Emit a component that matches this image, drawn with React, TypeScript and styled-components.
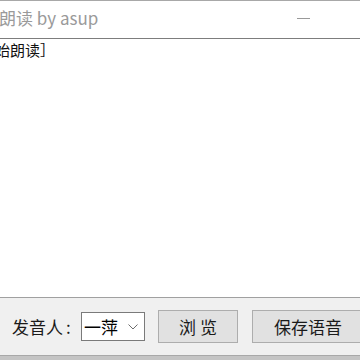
import styled, { createGlobalStyle } from "styled-components";

const GlobalStyle = createGlobalStyle`
  html, body {
    margin: 0;
    padding: 0;
    background: #f0f0f0;
    overflow: hidden;
  }
`;

const Screen = styled.div`
  width: 360px;
  height: 360px;
  display: flex;
  flex-direction: column;
  overflow: hidden;
  font-family: "Noto Sans CJK SC", "Noto Sans", sans-serif;
`;

const TopEdge = styled.div`
  height: 1px;
  flex-shrink: 0;
  background: #a8a8a8;
`;

const TitleBar = styled.div`
  height: 37px;
  flex-shrink: 0;
  display: flex;
  align-items: center;
  justify-content: space-between;
  background: #ffffff;
  border-bottom: 1px solid #7d7d7d;
`;

const Title = styled.span`
  margin-left: -1px;
  margin-top: -4px;
  font-size: 17px;
  color: #9a9a9a;
  white-space: nowrap;
`;

const Minimize = styled.span`
  width: 13px;
  height: 1px;
  margin-right: 50px;
  margin-top: -2px;
  background: #999999;
`;

const TextPane = styled.div`
  flex: 1;
  background: #ffffff;
  border-bottom: 1px solid #a0a0a0;
  padding-top: 1px;
  overflow: hidden;
`;

const Line = styled.div`
  margin-left: -35px;
  font-size: 15px;
  line-height: 20px;
  color: #111111;
  white-space: nowrap;
`;

const Panel = styled.div`
  height: 57px;
  flex-shrink: 0;
  display: flex;
  align-items: center;
  padding-left: 12px;
  background: #f0f0f0;
  box-sizing: border-box;
`;

const Label = styled.span`
  width: 69px;
  flex-shrink: 0;
  font-size: 17px;
  color: #1a1a1a;
  white-space: nowrap;
`;

const Colon = styled.span`
  margin-left: 3px;
`;

const Select = styled.div`
  width: 64px;
  height: 29px;
  flex-shrink: 0;
  box-sizing: border-box;
  display: flex;
  align-items: center;
  justify-content: space-between;
  padding: 0 6px 0 2px;
  margin-right: 13px;
  background: #ffffff;
  border: 1px solid #7a7a7a;
  font-size: 17px;
  color: #000000;
`;

const Button = styled.div<{ $width: number }>`
  width: ${({ $width }) => $width}px;
  height: 33px;
  flex-shrink: 0;
  box-sizing: border-box;
  display: flex;
  align-items: center;
  justify-content: center;
  margin-right: 14px;
  background: #e1e1e1;
  border: 1px solid #adadad;
  font-size: 17px;
  color: #1a1a1a;
  white-space: pre;
`;

const BottomStrip = styled.div`
  height: 5px;
  flex-shrink: 0;
  background: #c4c4c4;
  border-top: 1px solid #a8a8a8;
  box-sizing: border-box;
`;

export default function App() {
  return (
    <>
      <GlobalStyle />
      <Screen>
        <TopEdge />
        <TitleBar>
          <Title>朗读 by asup</Title>
          <Minimize />
        </TitleBar>
        <TextPane>
          <Line>［开始朗读］</Line>
        </TextPane>
        <Panel>
          <Label>
            发音人<Colon>:</Colon>
          </Label>
          <Select>
            <span>一萍</span>
            <svg width="10" height="6" viewBox="0 0 10 6">
              <path d="M0.5 0.5 L5 5 L9.5 0.5" fill="none" stroke="#6d6d6d" strokeWidth="1" />
            </svg>
          </Select>
          <Button $width={80}>浏 览</Button>
          <Button $width={112}>保存语音</Button>
        </Panel>
        <BottomStrip />
      </Screen>
    </>
  );
}
